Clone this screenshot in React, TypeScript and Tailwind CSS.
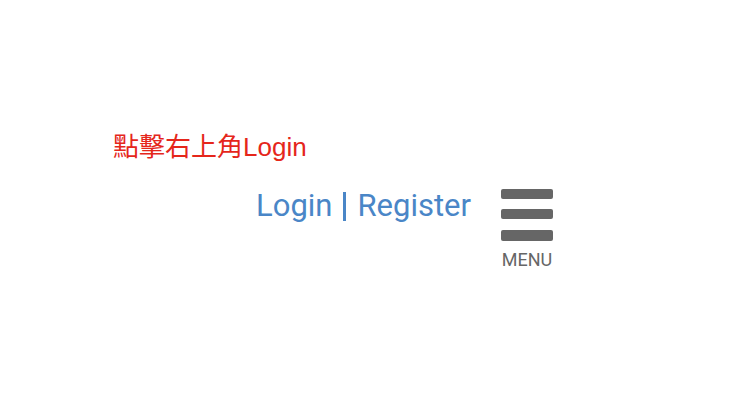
const App = () => {
  return (
    <div className="w-[740px] h-[416px] bg-white overflow-hidden">
      <div className="pt-[134px] pl-[113px]">
        {/* Hint text */}
        <p
          className="text-[26px] leading-none text-[#e5261b]"
          style={{ fontFamily: '"Liberation Sans", "Noto Sans CJK TC", sans-serif' }}
        >
          點擊右上角Login
        </p>

        {/* Header links + menu */}
        <div className="flex items-start mt-[29px] pl-[143px]">
          <div
            className="flex items-center text-[31px] leading-none text-[#4a86c7] mt-[1px]"
            style={{ fontFamily: 'Roboto, sans-serif' }}
          >
            <a className="cursor-pointer">Login</a>
            <span className="mx-[11px] w-[3px] h-[29px] bg-[#4a86c7] mt-[2px]" />
            <a className="cursor-pointer">Register</a>
          </div>

          <button className="ml-[30px] flex flex-col items-center">
            <div className="flex flex-col">
              <span className="block w-[52px] h-[10px] rounded-[2px] bg-[#666666]" />
              <span className="block w-[52px] h-[10px] mt-[10px] rounded-[2px] bg-[#666666]" />
              <span className="block w-[52px] h-[11px] mt-[11px] rounded-[2px] bg-[#666666]" />
            </div>
            <span
              className="mt-[10px] text-[18px] leading-none text-[#666666]"
              style={{ fontFamily: 'Roboto, sans-serif' }}
            >
              MENU
            </span>
          </button>
        </div>
      </div>
    </div>
  );
};

export default App;
